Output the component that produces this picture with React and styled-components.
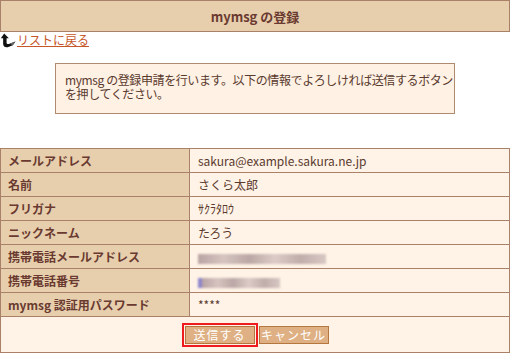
import React from 'react';
import styled, { createGlobalStyle } from 'styled-components';

const GlobalStyle = createGlobalStyle`
  html, body {
    margin: 0;
    padding: 0;
    background: #ffffff;
  }
  body {
    font-family: "Noto Sans CJK JP", "Liberation Sans", sans-serif;
    font-size: 12px;
    color: #5a3a2e;
  }
`;

const Page = styled.div`
  width: 510px;
  display: flex;
  flex-direction: column;
`;

const Header = styled.h1`
  margin: 0;
  height: 30px;
  border: 1px solid #a98068;
  background: #e7cfae;
  color: #6a3a30;
  font-size: 13px;
  font-weight: bold;
  display: flex;
  align-items: center;
  justify-content: center;
`;

const BackRow = styled.div`
  height: 16px;
  display: flex;
  align-items: center;
  padding-left: 1px;
  gap: 1px;
`;

const BackLink = styled.a`
  color: #c6562a;
  text-decoration: underline;
  font-size: 12px;
  line-height: 14px;
  cursor: pointer;
`;

const Notice = styled.div`
  margin: 15px auto 0;
  width: 389px;
  height: 31px;
  padding: 9px 0 9px 9px;
  border: 1px solid #b08a6e;
  background: #fff1e4;
  color: #5a3a2e;
  font-size: 12px;
  line-height: 14px;
  letter-spacing: -0.4px;
`;

const Table = styled.table`
  margin-top: 34px;
  width: 510px;
  border-collapse: collapse;
  border: 1px solid #a98068;
`;

const Label = styled.th`
  width: 181px;
  height: 23px;
  padding: 0 0 0 7px;
  text-align: left;
  background: #e7cfae;
  border: 1px solid #a98068;
  color: #6a3a30;
  font-size: 12px;
  font-weight: bold;
`;

const Value = styled.td`
  height: 23px;
  padding: 0 0 0 8px;
  background: #fff2e6;
  border: 1px solid #a98068;
  color: #5a3a2e;
  font-size: 12px;
`;

const Blurred = styled.span`
  display: inline-block;
  vertical-align: middle;
  width: ${p => p.$w}px;
  height: 10px;
  background: linear-gradient(90deg, #b9a4a4, #d6c4c0 20%, #bba8a6 40%, #dccbc6 60%, #c0aeab 80%, #d8c8c4);
  filter: blur(1px);
  border-left: ${p => (p.$mark ? '4px solid #8e86cc' : '0')};
`;

const ButtonCell = styled.td`
  height: 35px;
  background: #fff2e6;
  border: 1px solid #a98068;
  text-align: center;
  padding: 0;
`;

const Buttons = styled.div`
  display: flex;
  justify-content: center;
  align-items: center;
  gap: 1px;
  padding-top: 1px;
`;

const Focus = styled.span`
  display: inline-flex;
  padding: 1px;
  border: 2px solid #ee1c1c;
`;

const Button = styled.button`
  width: ${p => p.$w}px;
  height: 18px;
  padding: 0;
  background: #deb083;
  border: 1px solid #b5773e;
  color: #ffffff;
  font-family: "Noto Sans CJK JP", sans-serif;
  font-size: 12px;
  line-height: 16px;
  letter-spacing: 1px;
  cursor: pointer;
`;

const BackIcon = () => (
  <svg width="15" height="15" viewBox="0 0 14 14">
    <path d="M3 0.5 L-0.2 5 L2 5 L2 10 C2 12.5 4 13.8 6.3 13.2 L11 11.4 L13.5 8 L8 10 C6.3 10.6 5.2 10 5.2 9 L5.2 5 L7.3 5 Z" fill="#111" />
    <path d="M8 10 L13.5 8 L11 11.4 Z" fill="#666" />
  </svg>
);

const rows = [
  ['メールアドレス', 'sakura@example.sakura.ne.jp'],
  ['名前', 'さくら太郎'],
  ['フリガナ', 'ｻｸﾗﾀﾛｳ'],
  ['ニックネーム', 'たろう'],
  ['携帯電話メールアドレス', <Blurred $w={128} />],
  ['携帯電話番号', <Blurred $w={78} $mark />],
  ['mymsg 認証用パスワード', '****'],
];

export default function App() {
  return (
    <Page>
      <GlobalStyle />
      <Header>mymsg の登録</Header>
      <BackRow>
        <BackIcon />
        <BackLink>リストに戻る</BackLink>
      </BackRow>
      <Notice>
        mymsg の登録申請を行います。以下の情報でよろしければ送信するボタンを押してください。
      </Notice>
      <Table>
        <tbody>
          {rows.map(([k, v]) => (
            <tr key={k}>
              <Label>{k}</Label>
              <Value>{v}</Value>
            </tr>
          ))}
          <tr>
            <ButtonCell colSpan={2}>
              <Buttons>
                <Focus>
                  <Button $w={70}>送信する</Button>
                </Focus>
                <Button $w={70}>キャンセル</Button>
              </Buttons>
            </ButtonCell>
          </tr>
        </tbody>
      </Table>
    </Page>
  );
}
